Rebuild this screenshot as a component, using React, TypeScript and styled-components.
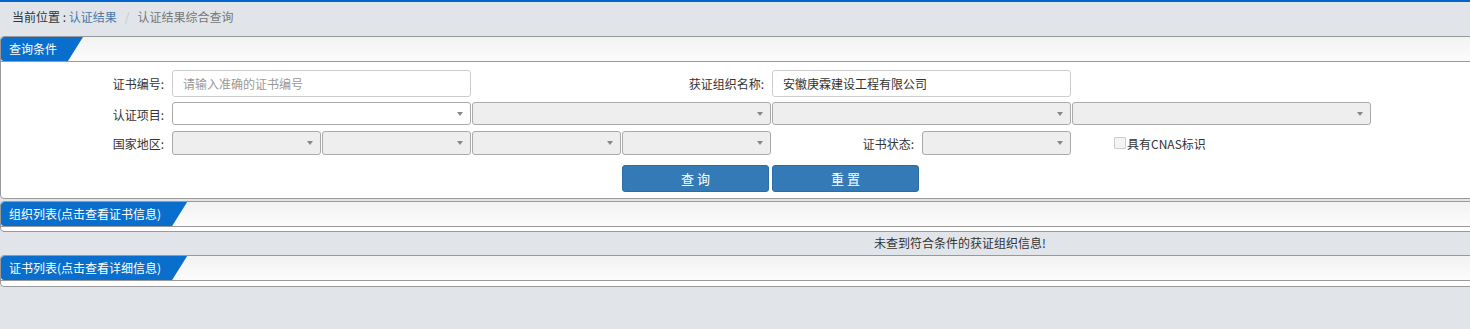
import styled, { createGlobalStyle } from 'styled-components';

const GlobalStyle = createGlobalStyle`
    html, body {
        margin: 0;
        padding: 0;
        overflow: hidden;
        background: #e1e5e9;
    }
    body {
        font-family: "Noto Sans CJK SC", "Liberation Sans", sans-serif;
        font-size: 12px;
        color: #333;
    }
`;

const Page = styled.div`
    width: 1920px;
    border-top: 2px solid #0066cc;
    min-height: 327px;
`;

const Breadcrumb = styled.div`
    height: 30px;
    line-height: 30px;
    padding: 0 12px;
    color: #333;
    margin-bottom: 4px;
`;

const Crumb = styled.span<{ $tone: 'link' | 'sep' | 'current' }>`
    color: ${p => p.$tone === 'link' ? '#4a79ab' : p.$tone === 'sep' ? '#c8c8c8' : '#777'};
    margin: ${p => p.$tone === 'sep' ? '0 8px' : '0'};
`;

const Panel = styled.div<{ $gap?: number }>`
    border: 1px solid #999;
    border-radius: 4px;
    background: #fff;
    margin-top: ${p => p.$gap ?? 0}px;
    overflow: hidden;
`;

const PanelHead = styled.div`
    height: 24px;
    border-bottom: 1px solid #999;
    background: linear-gradient(to bottom, #f2f2f2, #fcfcfc);
    display: flex;
`;

const Tab = styled.div`
    background: #0a6fcc;
    color: #fff;
    line-height: 24px;
    padding: 0 26px 0 8px;
    border-radius: 3px 0 0 3px;
    clip-path: polygon(0 0, 100% 0, calc(100% - 15px) 100%, 0 100%);
    white-space: nowrap;
`;

const PanelBody = styled.div<{ $h: number }>`
    height: ${p => p.$h}px;
`;

const Form = styled.div`
    display: grid;
    grid-template-columns: 171px repeat(8, 150px);
    grid-template-rows: 27px 24px 24px 32px;
    row-gap: 5px;
    padding-top: 8px;
    align-items: center;
`;

const Label = styled.div<{ $span?: number }>`
    grid-column: span ${p => p.$span ?? 1};
    text-align: right;
    padding-right: 8px;
    color: #333;
`;

const TextInput = styled.input<{ $span: number }>`
    grid-column: span ${p => p.$span};
    box-sizing: border-box;
    width: calc(100% - 1px);
    height: 27px;
    border: 1px solid #ccc;
    border-radius: 3px;
    padding: 0 10px;
    font: inherit;
    color: #333;
    outline: none;
    &::placeholder { color: #999; }
`;

const Select = styled.div<{ $span: number; $h: number; $disabled?: boolean }>`
    grid-column: span ${p => p.$span};
    align-self: start;
    box-sizing: border-box;
    width: calc(100% - 1px);
    height: ${p => p.$h}px;
    border: 1px solid #aaa;
    border-radius: 3px;
    background: ${p => p.$disabled ? '#eee' : '#fff'};
    position: relative;
    &::after {
        content: '';
        position: absolute;
        right: 7px;
        top: 50%;
        margin-top: -2px;
        border-left: 3.5px solid transparent;
        border-right: 3.5px solid transparent;
        border-top: 4px solid #888;
    }
`;

const CheckCell = styled.label`
    grid-column: span 2;
    padding-left: 42px;
    display: flex;
    align-items: center;
    color: #333;
`;

const Box = styled.span`
    width: 10px;
    height: 10px;
    border: 1px solid #ccc;
    background: #f4f4f4;
    border-radius: 1px;
    margin-right: 1px;
`;

const Button = styled.button<{ $start: number }>`
    grid-column: ${p => p.$start} / span 1;
    align-self: end;
    width: 147px;
    height: 27px;
    border: 1px solid #2e6da4;
    border-radius: 3px;
    background: #337ab7;
    color: #fff;
    font: inherit;
    font-size: 13px;
    letter-spacing: 3px;
    text-indent: 3px;
    padding: 0;
`;

const Message = styled.div`
    height: 23px;
    line-height: 22px;
    text-align: center;
    color: #333;
`;

const Spacer = styled.div`
    grid-column: span 2;
`;

export default function App() {
    return (
        <>
            <GlobalStyle />
            <Page>
                <Breadcrumb>
                    当前位置 : <Crumb $tone="link">认证结果</Crumb>
                    <Crumb $tone="sep">/</Crumb>
                    <Crumb $tone="current">认证结果综合查询</Crumb>
                </Breadcrumb>

                <Panel>
                    <PanelHead><Tab>查询条件</Tab></PanelHead>
                    <PanelBody $h={136}>
                        <Form>
                            <Label>证书编号:</Label>
                            <TextInput $span={2} placeholder="请输入准确的证书编号" />
                            <Label $span={2}>获证组织名称:</Label>
                            <TextInput $span={2} defaultValue="安徽庚霖建设工程有限公司" />
                            <Spacer />

                            <Label>认证项目:</Label>
                            <Select $span={2} $h={23} />
                            <Select $span={2} $h={23} $disabled />
                            <Select $span={2} $h={23} $disabled />
                            <Select $span={2} $h={23} $disabled />

                            <Label>国家地区:</Label>
                            <Select $span={1} $h={24} $disabled />
                            <Select $span={1} $h={24} $disabled />
                            <Select $span={1} $h={24} $disabled />
                            <Select $span={1} $h={24} $disabled />
                            <Label>证书状态:</Label>
                            <Select $span={1} $h={24} $disabled />
                            <CheckCell><Box />具有CNAS标识</CheckCell>

                            <Button $start={5}>查询</Button>
                            <Button $start={6}>重置</Button>
                        </Form>
                    </PanelBody>
                </Panel>

                <Panel $gap={2}>
                    <PanelHead><Tab>组织列表(点击查看证书信息)</Tab></PanelHead>
                    <PanelBody $h={4} />
                </Panel>
                <Message>未查到符合条件的获证组织信息!</Message>

                <Panel>
                    <PanelHead><Tab>证书列表(点击查看详细信息)</Tab></PanelHead>
                    <PanelBody $h={5} />
                </Panel>
            </Page>
        </>
    );
}
